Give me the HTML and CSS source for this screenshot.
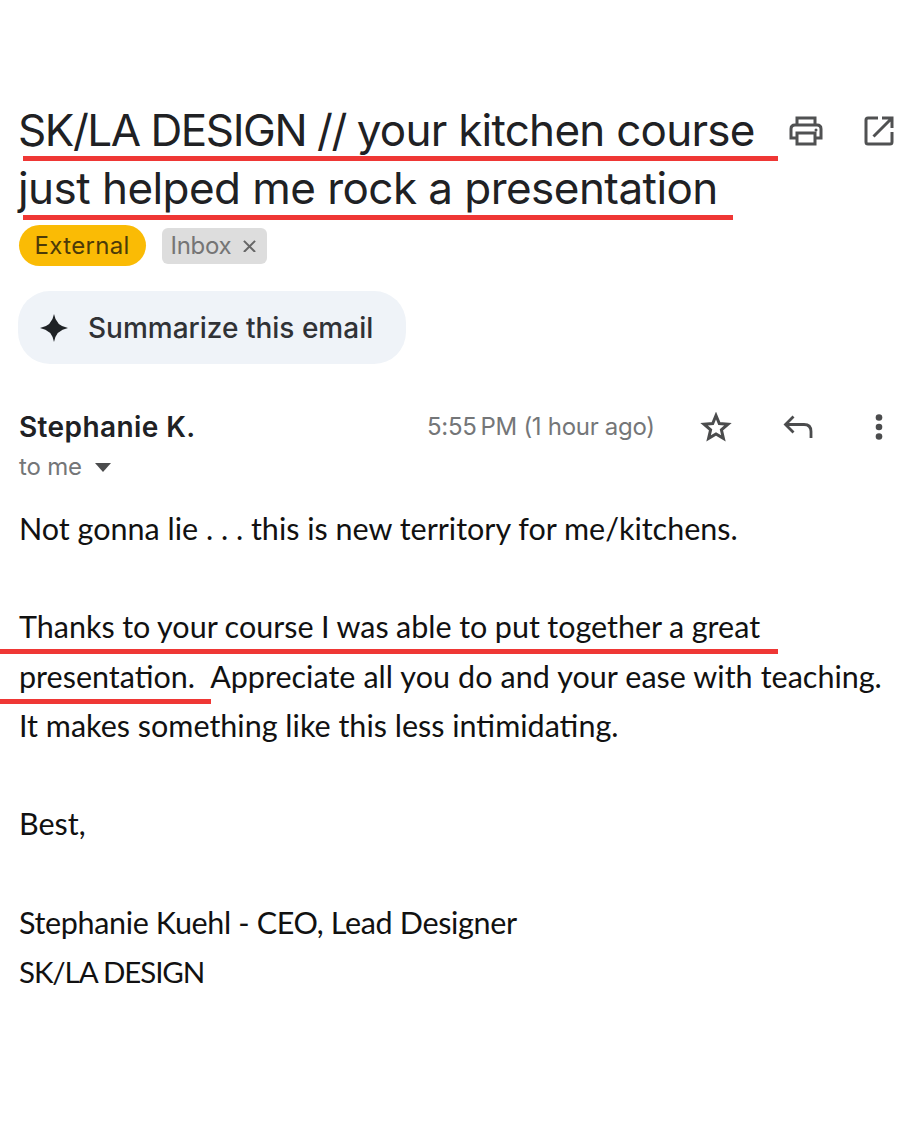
FILE: index.html
```html
<!DOCTYPE html>
<html lang="en">
<head>
  <title>SK/LA DESIGN // your kitchen course just helped me rock a presentation</title>
  <meta charset="utf-8">
  <meta name="viewport" content="width=device-width, initial-scale=1">
  <link rel="stylesheet" href="styles.css">
</head>
<body>
  <main class="email">
    <header class="subject">
      <h1>
        <span class="line marked first"><span class="caps">SK/LA DESIGN // </span>your kitchen course</span>
        <span class="line marked second">just helped me rock a presentation</span>
      </h1>
      <div class="subject-actions">
        <svg class="print" width="34" height="30" viewBox="0 0 34 30" fill="none" stroke="#505152" stroke-width="3">
          <path d="M8 9V2h18v7M8 22H2V13q0-4 4-4h22q4 0 4 4v9h-6M8 17h18v11H8z"/>
          <circle cx="27" cy="14" r="1.5" fill="#505152" stroke="none"/>
        </svg>
        <svg class="open" width="30" height="30" viewBox="0 0 30 30" fill="none" stroke="#505152" stroke-width="3">
          <path d="M14 2H4Q2 2 2 4v22q0 2 2 2h22q2 0 2-2V16M18 2h10v10M28 2L9.500 20.500"/>
        </svg>
      </div>
    </header>

    <div class="labels">
      <span class="external">External</span>
      <span class="inbox">Inbox
        <svg width="13" height="13" viewBox="0 0 14 14" stroke="#666" stroke-width="2.200"><path d="M1 2l12 12M13 2L1 14"/></svg>
      </span>
    </div>

    <button class="summarize">
      <svg width="28" height="28" viewBox="0 0 28 28" fill="#1f2226"><path d="M14 0Q16 12 28 14Q16 16 14 28Q12 16 0 14Q12 12 14 0z"/></svg>
      <span>Summarize this email</span>
    </button>

    <div class="sender">
      <span class="name">Stephanie K.</span>
      <span class="time">5:55&#8239;PM (1 hour ago)</span>
      <svg class="star" width="32" height="30" viewBox="0 0 32 30" fill="none" stroke="#4b4c4d" stroke-width="3">
        <path d="M16 3.500l3.300 8 8.700.7-6.600 5.700 2 8.500-7.400-4.500-7.400 4.500 2-8.500L4 12.200l8.700-.7z"/>
      </svg>
      <svg class="reply" width="30" height="24" viewBox="0 0 30 24" fill="none" stroke="#4b4c4d" stroke-width="2.800">
        <path d="M10.500 1.500L2.500 9.500l8 8M2.500 9.500H21q7 0 7 7V23"/>
      </svg>
      <svg class="more" width="8" height="26" viewBox="0 0 8 26" fill="#4b4c4d">
        <circle cx="4" cy="3.500" r="3.300"/><circle cx="4" cy="13" r="3.300"/><circle cx="4" cy="22.500" r="3.300"/>
      </svg>
    </div>
    <div class="recipient">
      <span>to me</span>
      <svg width="16" height="9" viewBox="0 0 16 9" fill="#4b4c4d"><path d="M0 0h16L8 9z"/></svg>
    </div>

    <article class="message">
      <p><span class="line">Not gonna lie . . . this is new territory for me/kitchens.</span></p>
      <p>
        <span class="line marked thanks">Thanks to your course I was able to put together a great</span>
        <span class="line marked presentation">presentation.&nbsp; Appreciate all you do and your ease with teaching.</span>
        <span class="line">It makes something like this less intimidating.</span>
      </p>
      <p><span class="line">Best,</span></p>
      <p>
        <span class="line signature">Stephanie Kuehl - CEO, Lead Designer</span>
        <span class="line company">SK/LA DESIGN</span>
      </p>
    </article>
  </main>
</body>
</html>
```
FILE: styles.css
```css
body {
  margin: 0;
  background-color: #fff;
  font-family: Inter, sans-serif;
  color: #202124;
}

.email {
  box-sizing: border-box;
  width: 900px;
  height: 1125px;
  padding: 101px 0 0 19px;
  overflow: hidden;
}

.line {
  display: block;
  white-space: nowrap;
}

/* red underlines */
.marked {
  position: relative;
}

.marked::after {
  content: "";
  position: absolute;
  height: 5px;
  background-color: #ef3735;
}

.subject {
  display: flex;
  height: 116px;
}

.subject h1 {
  width: 771px;
  margin: 0 0 0 -1px;
  font-size: 44px;
  line-height: 58px;
  font-weight: 400;
}

.subject .first {
  letter-spacing: -0.75px;
}

.subject .caps {
  letter-spacing: -1.45px;
}

.subject .second {
  letter-spacing: -0.55px;
}

.first::after {
  left: 5px;
  top: 55px;
  width: 755px;
}

.second::after {
  left: 5px;
  top: 56px;
  width: 710px;
}

.subject-actions {
  display: flex;
  gap: 41px;
  padding-top: 15px;
}

.labels {
  display: flex;
  align-items: center;
  gap: 16px;
  height: 41px;
  margin-top: 8px;
  font-size: 24px;
}

.external {
  box-sizing: border-box;
  width: 127px;
  margin-left: -0.5px;
  padding-left: 16px;
  border-radius: 21px;
  background-color: #fabb05;
  line-height: 41px;
  color: #4c3a08;
  letter-spacing: 0.35px;
}

.inbox {
  display: flex;
  align-items: center;
  justify-content: space-between;
  box-sizing: border-box;
  width: 105px;
  padding: 0 11px 0 9px;
  border-radius: 6px;
  background-color: #ddd;
  line-height: 36px;
  color: #757575;
  letter-spacing: -0.3px;
}

.summarize {
  display: flex;
  align-items: center;
  gap: 20px;
  width: 388px;
  height: 73px;
  margin: 25px 0 0 -1px;
  padding: 0 0 0 22px;
  border: 0;
  border-radius: 32px;
  background-color: #eff3f8;
  font: 500 28px Inter, sans-serif;
  color: #303236;
}

.sender {
  display: flex;
  align-items: center;
  height: 40px;
  margin-top: 43px;
}

.name {
  width: 408px;
  font-size: 28px;
  font-weight: 600;
  letter-spacing: 0.4px;
}

.time {
  width: 273px;
  padding-bottom: 2px;
  font-size: 24px;
  letter-spacing: -0.3px;
  color: #747678;
  white-space: nowrap;
}

.reply {
  margin-left: 51px;
}

.more {
  margin-left: 62px;
}

.recipient {
  display: flex;
  align-items: center;
  gap: 13px;
  height: 40px;
  font-size: 24px;
  letter-spacing: -0.2px;
  color: #747678;
}

.recipient span {
  padding-bottom: 2px;
}

.message {
  margin-top: 17px;
  font: 30.5px/49.2px Lato, sans-serif;
  color: #111;
}

.message p {
  margin: 0 0 49.2px;
}

.thanks {
  word-spacing: -0.3px;
}

.thanks::after {
  left: -19px;
  top: 47px;
  width: 778px;
}

.presentation {
  word-spacing: 0.3px;
}

.presentation::after {
  left: -19px;
  top: 47px;
  width: 211px;
}

.signature {
  letter-spacing: -0.35px;
}

.company {
  font-size: 29.5px;
  letter-spacing: -1.1px;
}
```
